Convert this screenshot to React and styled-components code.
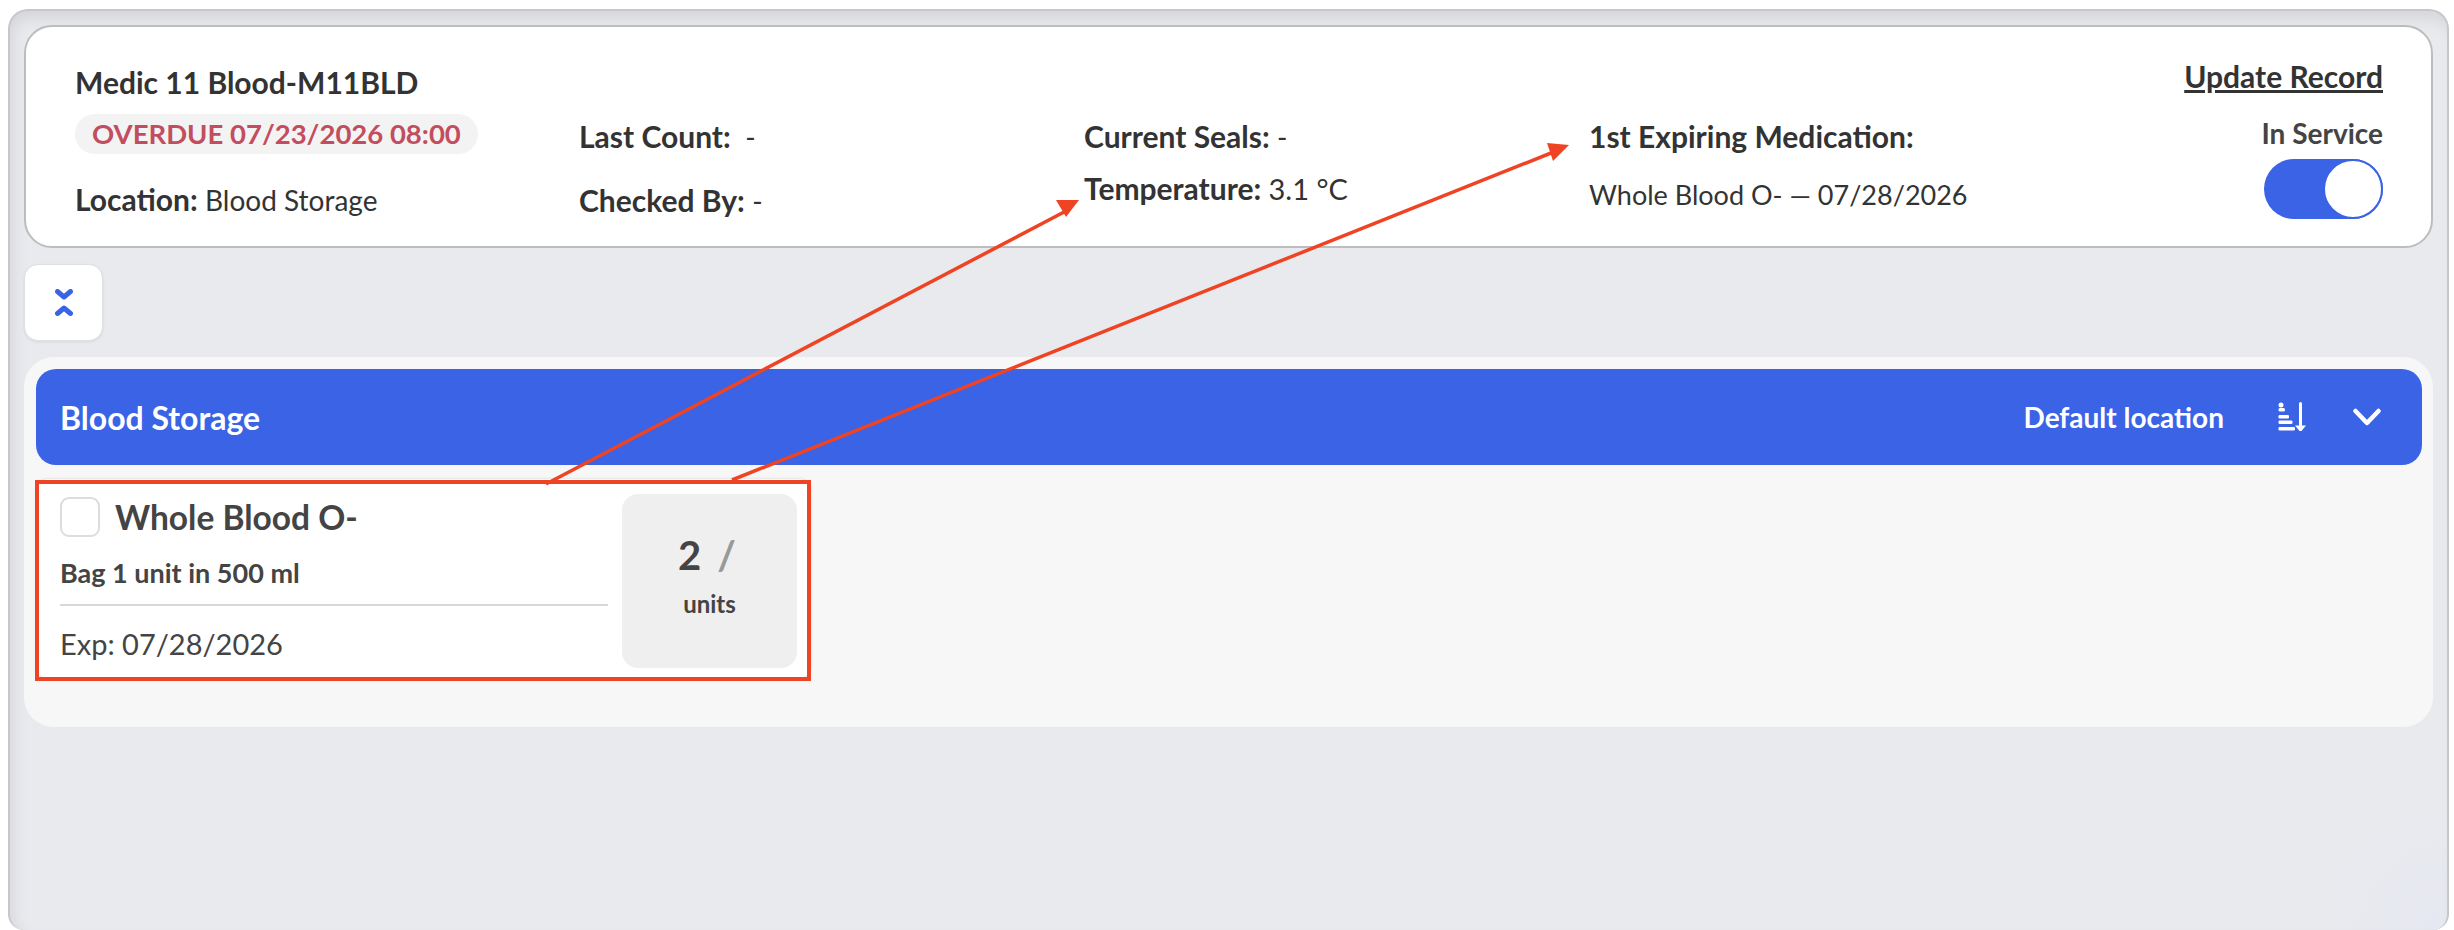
import React from "react";
import styled, { createGlobalStyle } from "styled-components";

const GlobalStyle = createGlobalStyle`
    html, body {
        margin: 0;
        padding: 0;
        background: #fff;
        font-family: Lato, "Open Sans", sans-serif;
        color: #333;
    }
    * {
        box-sizing: border-box;
    }
`;

const Page = styled.div`
    position: relative;
    width: 2454px;
    height: 930px;
    overflow: hidden;
    padding: 9px 5px 0 8px;
`;

const Frame = styled.div`
    height: 921px;
    padding: 14px 14px 0 14px;
    border: 2px solid #c6c6cb;
    border-bottom: 0;
    border-radius: 20px 20px 16px 16px;
    background: radial-gradient(circle at 100% 100%, #e6e8f2 0, #e9eaee 120px);
    box-shadow: inset 0 16px 14px -8px #d5d6da, inset 14px 0 12px -8px #dcdde1;
`;

const HeaderCard = styled.div`
    display: grid;
    grid-template-columns: 504px 505px 505px 1fr auto;
    height: 223px;
    padding-left: 49px;
    padding-right: 48px;
    background: #fff;
    border: 2px solid #bdbdbd;
    border-radius: 28px;
`;

const Column = styled.div`
    display: flex;
    flex-direction: column;
    align-items: flex-start;
    padding-top: ${props => props.$top}px;
    gap: ${props => props.$gap}px;
`;

const RightColumn = styled.div`
    display: flex;
    flex-direction: column;
    align-items: flex-end;
    padding-top: 32px;
`;

const Line = styled.div`
    font-size: 30px;
    line-height: 34px;
    font-weight: 700;
    color: #333;
    white-space: nowrap;
`;

const Value = styled.span`
    font-size: ${props => props.$size || 28}px;
    font-weight: 400;
`;

const Overdue = styled.div`
    height: 40px;
    margin: 15px 0 28px 0;
    padding: 0 17px;
    border-radius: 20px;
    background: #f3f3f3;
    color: #c24d5e;
    font-size: 27.5px;
    line-height: 40px;
    font-weight: 700;
    white-space: nowrap;
`;

const UpdateLink = styled.a`
    font-size: 30px;
    line-height: 34px;
    font-weight: 700;
    color: #333;
    text-decoration: underline;
`;

const ServiceLabel = styled.div`
    margin-top: 23px;
    margin-bottom: 9px;
    font-size: 28px;
    line-height: 34px;
    font-weight: 700;
    color: #444;
`;

const Toggle = styled.div`
    display: flex;
    justify-content: flex-end;
    width: 119px;
    height: 60px;
    border-radius: 30px;
    background: #3a63e6;
`;

const Knob = styled.div`
    width: 60px;
    height: 60px;
    border: 2px solid #3a63e6;
    border-radius: 50%;
    background: #fff;
`;

const CollapseButton = styled.button`
    display: flex;
    align-items: center;
    justify-content: center;
    width: 79px;
    height: 77px;
    margin: 16px 0 16px 0;
    padding: 0;
    background: #fff;
    border: 1px solid #e0e0e4;
    border-radius: 14px;
    box-shadow: 0 1px 3px rgba(0, 0, 0, 0.08);
`;

const Section = styled.section`
    height: 370px;
    padding: 12px 11px 0 12px;
    background: #f7f7f7;
    border-radius: 30px;
`;

const SectionBar = styled.div`
    display: flex;
    align-items: center;
    height: 96px;
    padding: 0 41px 0 24px;
    background: #3a63e6;
    border-radius: 20px;
    color: #fff;
`;

const SectionTitle = styled.div`
    flex: 1;
    font-size: 32px;
    font-weight: 700;
`;

const SectionNote = styled.div`
    margin-right: 54px;
    font-size: 28px;
    font-weight: 700;
`;

const SortIcon = styled.svg`
    width: 29px;
    height: 30px;
    margin-right: 46px;
`;

const ItemCard = styled.div`
    display: flex;
    width: 775px;
    height: 199px;
    margin-top: 14px;
    padding: 15px 14px 11px 24px;
    background: #fff;
    border-radius: 12px;
    box-shadow: 0 0 3px rgba(0, 0, 0, 0.15);
`;

const ItemInfo = styled.div`
    flex: 1;
    display: flex;
    flex-direction: column;
    margin-right: 14px;
`;

const ItemHead = styled.div`
    display: flex;
    align-items: center;
    gap: 15px;
    margin-top: 3px;
`;

const Checkbox = styled.div`
    width: 40px;
    height: 40px;
    border: 2px solid #ddd;
    border-radius: 9px;
    background: #fff;
`;

const ItemName = styled.div`
    font-size: 33.5px;
    line-height: 40px;
    font-weight: 700;
    color: #444;
`;

const ItemPack = styled.div`
    margin-top: 20px;
    padding-bottom: 15px;
    border-bottom: 2px solid #d8d8d8;
    font-size: 27px;
    line-height: 32px;
    font-weight: 700;
    color: #444;
`;

const ItemExp = styled.div`
    margin-top: 21px;
    font-size: 29px;
    line-height: 34px;
    color: #444;
`;

const UnitsBox = styled.div`
    display: flex;
    flex-direction: column;
    align-items: center;
    width: 175px;
    height: 174px;
    padding-top: 36px;
    background: #efefef;
    border-radius: 16px;
`;

const Count = styled.div`
    font-size: 40px;
    line-height: 50px;
    font-weight: 700;
    color: #444;
    margin-left: -5px;
`;

const Slash = styled.span`
    margin-left: 16px;
    font-weight: 700;
    color: #999;
`;

const Units = styled.div`
    margin-top: 9px;
    font-size: 24px;
    line-height: 30px;
    font-weight: 700;
    color: #444;
`;

const Annotations = styled.svg`
    position: absolute;
    top: 0;
    left: 0;
    pointer-events: none;
`;

const RED = "#ee4423";

export default function App() {
    return (
        <Page>
            <GlobalStyle />
            <Frame>
                <HeaderCard>
                    <Column $top={38} $gap={0}>
                        <Line>Medic 11 Blood-M11BLD</Line>
                        <Overdue>OVERDUE 07/23/2026 08:00</Overdue>
                        <Line>Location: <Value>Blood Storage</Value></Line>
                    </Column>
                    <Column $top={92} $gap={29}>
                        <Line>Last Count:&nbsp; <Value>-</Value></Line>
                        <Line>Checked By: <Value>-</Value></Line>
                    </Column>
                    <Column $top={92} $gap={17}>
                        <Line>Current Seals: <Value>-</Value></Line>
                        <Line>Temperature: <Value $size={29}>3.1 °C</Value></Line>
                    </Column>
                    <Column $top={92} $gap={23}>
                        <Line>1st Expiring Medication:</Line>
                        <Line><Value $size={27}>Whole Blood O- — 07/28/2026</Value></Line>
                    </Column>
                    <RightColumn>
                        <UpdateLink>Update Record</UpdateLink>
                        <ServiceLabel>In Service</ServiceLabel>
                        <Toggle><Knob /></Toggle>
                    </RightColumn>
                </HeaderCard>
                <CollapseButton>
                    <svg width="18" height="27" viewBox="0 0 18 27" fill="none" stroke="#3a63e6" strokeWidth="5" strokeLinecap="round" strokeLinejoin="round">
                        <path d="M2.5 2.5L9 8l6.5-5.5" />
                        <path d="M2.5 24.5L9 19l6.5 5.5" />
                    </svg>
                </CollapseButton>
                <Section>
                    <SectionBar>
                        <SectionTitle>Blood Storage</SectionTitle>
                        <SectionNote>Default location</SectionNote>
                        <SortIcon viewBox="0 0 29 30" fill="#fff">
                            <circle cx="3" cy="3" r="2.5" />
                            <rect x="0.5" y="6" width="6.5" height="3.5" rx="1.5" />
                            <rect x="0.5" y="13" width="10.5" height="3.5" rx="1.2" />
                            <rect x="0.5" y="18.5" width="14" height="3.5" rx="1.2" />
                            <rect x="0.5" y="25" width="16.5" height="3.5" rx="1.2" />
                            <path d="M22.5 1.5v23" stroke="#fff" strokeWidth="3" strokeLinecap="round" />
                            <path d="M17 23.5h11l-4.5 5.5h-2z" />
                        </SortIcon>
                        <svg width="28" height="18" viewBox="0 0 28 18" fill="none" stroke="#fff" strokeWidth="4.5" strokeLinecap="round" strokeLinejoin="round">
                            <path d="M2.5 3L14 15 25.5 3" />
                        </svg>
                    </SectionBar>
                    <ItemCard>
                        <ItemInfo>
                            <ItemHead>
                                <Checkbox />
                                <ItemName>Whole Blood O-</ItemName>
                            </ItemHead>
                            <ItemPack>Bag 1 unit in 500 ml</ItemPack>
                            <ItemExp>Exp: 07/28/2026</ItemExp>
                        </ItemInfo>
                        <UnitsBox>
                            <Count>2<Slash>/</Slash></Count>
                            <Units>units</Units>
                        </UnitsBox>
                    </ItemCard>
                </Section>
            </Frame>
            <Annotations width="2454" height="930" viewBox="0 0 2454 930">
                <rect x="37" y="482" width="772" height="197" fill="none" stroke={RED} strokeWidth="4" />
                <path d="M546 484L1066 211" stroke={RED} strokeWidth="3.5" fill="none" />
                <path d="M1079 200L1056 200L1066 217z" fill={RED} />
                <path d="M732 480L1556 151" stroke={RED} strokeWidth="3.5" fill="none" />
                <path d="M1569 145L1547 143L1553 161z" fill={RED} />
            </Annotations>
        </Page>
    );
}
